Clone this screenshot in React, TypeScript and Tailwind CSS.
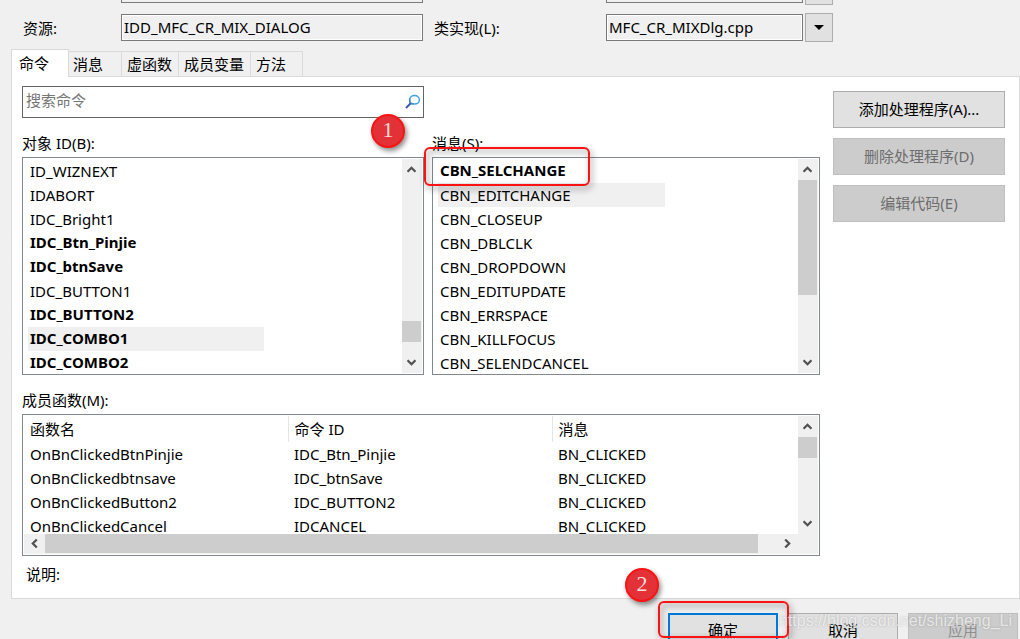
import type { ReactNode } from "react";

const objectIds = [
  { name: "ID_WIZNEXT" },
  { name: "IDABORT" },
  { name: "IDC_Bright1" },
  { name: "IDC_Btn_Pinjie", bold: true },
  { name: "IDC_btnSave", bold: true },
  { name: "IDC_BUTTON1" },
  { name: "IDC_BUTTON2", bold: true },
  { name: "IDC_COMBO1", bold: true, selected: true },
  { name: "IDC_COMBO2", bold: true },
];

const messages = [
  { name: "CBN_SELCHANGE", bold: true },
  { name: "CBN_EDITCHANGE", selected: true },
  { name: "CBN_CLOSEUP" },
  { name: "CBN_DBLCLK" },
  { name: "CBN_DROPDOWN" },
  { name: "CBN_EDITUPDATE" },
  { name: "CBN_ERRSPACE" },
  { name: "CBN_KILLFOCUS" },
  { name: "CBN_SELENDCANCEL" },
];

const members = [
  ["OnBnClickedBtnPinjie", "IDC_Btn_Pinjie", "BN_CLICKED"],
  ["OnBnClickedbtnsave", "IDC_btnSave", "BN_CLICKED"],
  ["OnBnClickedButton2", "IDC_BUTTON2", "BN_CLICKED"],
  ["OnBnClickedCancel", "IDCANCEL", "BN_CLICKED"],
];

const tabs = ["消息", "虚函数", "成员变量", "方法"];

type Item = { name: string; bold?: boolean; selected?: boolean };

const Chevron = ({ className = "" }: { className?: string }) => (
  <svg viewBox="0 0 9 7" className={`w-[9px] h-[7px] ${className}`} fill="none" stroke="#505050" strokeWidth="2.2">
    <path d="M0.5 5.8 L4.5 1.8 L8.5 5.8" />
  </svg>
);

const VerticalScroll = ({ thumb }: { thumb: string }) => (
  <div className="w-5 shrink-0 flex flex-col bg-[#f0f0f0]">
    <button aria-label="向上滚动" className="h-[21px] shrink-0 w-[19px] flex items-center justify-center"><Chevron /></button>
    <div className="flex-1"><div className={`w-[19px] bg-[#cdcdcd] ${thumb}`} /></div>
    <button aria-label="向下滚动" className="h-[21px] shrink-0 w-[19px] flex items-center justify-center"><Chevron className="rotate-180" /></button>
  </div>
);

const ListBox = ({ labelId, items, thumb }: { labelId: string; items: Item[]; thumb: string }) => (
  <div className="h-[218px] flex border border-[#828790] bg-white p-px">
    <ul role="listbox" aria-labelledby={labelId} className="flex-1 min-w-0 overflow-hidden pl-1">
      {items.map((item) => (
        <li
          key={item.name}
          role="option"
          aria-selected={!!item.selected}
          className={`h-6 pl-0.5 w-[63%] whitespace-nowrap ${item.bold ? "font-bold leading-[22px]" : "leading-6"} ${item.selected ? "bg-[#f0f0f0]" : ""}`}
        >
          {item.name}
        </li>
      ))}
    </ul>
    <VerticalScroll thumb={thumb} />
  </div>
);

const Marker = ({ children, className }: { children: ReactNode; className: string }) => (
  <span className={`absolute z-10 size-[34px] rounded-full border-2 border-[#fb1313] bg-[#e23237] text-center text-[22px] leading-[28px] text-[#ffdede] font-['Liberation_Serif',serif] shadow-[2px_3px_5px_rgba(0,0,0,0.45)] ${className}`}>
    {children}
  </span>
);

const Frame = ({ className }: { className: string }) => (
  <span className={`absolute z-10 pointer-events-none rounded-md border-2 border-[#fb1313] drop-shadow-[2px_3px_3px_rgba(0,0,0,0.5)] ${className}`} />
);

const SideButton = ({ children, disabled }: { children: ReactNode; disabled?: boolean }) => (
  <button
    disabled={disabled}
    className="h-[37px] w-full pb-0.5 border border-[#adadad] bg-[#e1e1e1] text-black disabled:border-[#bfbfbf] disabled:bg-[#cccccc] disabled:text-[#6d6d6d]"
  >
    {children}
  </button>
);

const App = () => {
  return (
    <main className="relative h-screen overflow-hidden flex flex-col bg-[#f0f0f0] text-black text-[15px] leading-6 font-['Noto_Sans','Noto_Sans_CJK_SC',sans-serif]">
      <div className="grid grid-cols-[98px_302fr_183px_197fr_2px_28px] pl-[23px] pr-[187px]">
        <div className="col-start-2 h-[3px] border border-t-0 border-[#7a7a7a]" />
        <div className="col-start-4 h-[3px] border border-t-0 border-[#7a7a7a]" />
        <div className="col-start-6 h-[5px] border border-t-0 border-[#adadad] bg-[#e1e1e1]" />
      </div>

      <div className="mt-2 grid grid-cols-[98px_302fr_183px_197fr_2px_28px] items-center pl-[23px] pr-[187px]">
        <label htmlFor="resource">资源:</label>
        <input id="resource" readOnly value="IDD_MFC_CR_MIX_DIALOG" className="h-[27px] w-full min-w-0 border border-[#7a7a7a] px-0.5 pb-0.5 outline outline-1 -outline-offset-2 outline-white" />
        <label htmlFor="impl" className="pl-[11px]">类实现(L):</label>
        <input id="impl" readOnly value="MFC_CR_MIXDlg.cpp" className="h-[27px] w-full min-w-0 border border-[#7a7a7a] px-0.5 pb-0.5 outline outline-1 -outline-offset-2 outline-white" />
        <button aria-label="打开列表" className="col-start-6 h-[29px] flex items-center justify-center border border-[#adadad] bg-[#e1e1e1]">
          <svg viewBox="0 0 10 5" className="w-[10px] h-[5px]"><path d="M0 0H10L5 5Z" /></svg>
        </button>
      </div>

      <div role="tablist" className="relative z-[1] mt-[7px] ml-[11px] flex items-end">
        <button role="tab" aria-selected="true" className="z-[1] h-7 w-[58px] pl-[7px] pb-0.5 text-left border border-b-0 border-[#dadada] bg-white">命令</button>
        {tabs.map((tab, i) => (
          <button
            key={tab}
            role="tab"
            aria-selected="false"
            className={`h-[26px] min-w-[53px] px-[5px] pr-1.5 text-left border border-[#dadada] bg-[#f0f0f0] ${i === 0 ? "-ml-0.5 w-[55px]" : "-ml-px"}`}
          >
            {tab}
          </button>
        ))}
      </div>

      <section className="-mt-px ml-[11px] flex gap-[13px] border border-[#dadada] bg-white pl-2.5 pr-3.5 pt-[9px] pb-[11px]">
        <div className="flex-1 min-w-0">
          <div className="grid grid-cols-[402fr_388fr] gap-x-2">
            <div className="relative h-8 flex border border-[#646464]">
              <input aria-label="搜索命令" placeholder="搜索命令" className="flex-1 min-w-0 px-[3px] pb-1 outline-none placeholder:text-[#767676]" />
              <button aria-label="搜索" className="w-[18px] flex items-center">
                <svg viewBox="0 0 16 16" className="size-4" fill="none">
                  <ellipse cx="9.5" cy="5.8" rx="4.9" ry="4.3" stroke="#3fa3dc" strokeWidth="1.5" />
                  <path d="M4.8 4.6V9.8H8.6" stroke="#4a83c8" strokeWidth="1.3" />
                  <path d="M5.6 9.4L1 14" stroke="#3b57a8" strokeWidth="2" />
                </svg>
              </button>
              <Marker className="right-[18px] top-[27px]">1</Marker>
            </div>
            <div className="col-start-1 pt-[13px]">
              <div id="objects" className="mb-0.5">对象 ID(B):</div>
              <ListBox labelId="objects" items={objectIds} thumb="mt-[141px] h-[21px]" />
            </div>
            <div className="relative pt-[13px]">
              <div id="messages" className="mb-0.5">消息(S):</div>
              <ListBox labelId="messages" items={messages} thumb="h-[115px]" />
              <Frame className="-left-2 top-[29px] w-[166px] h-[39px]" />
            </div>
          </div>

          <div id="members" className="mt-[13px] mb-0.5">成员函数(M):</div>
          <div className="h-[142px] flex flex-col border border-[#828790] p-px">
            <div className="flex-1 min-h-0 flex">
              <div className="flex-1 min-w-0 overflow-hidden">
                <table aria-labelledby="members" className="w-full table-fixed text-left">
                  <thead>
                    <tr className="h-[26px]">
                      <th className="w-[264px] p-0 pl-1.5 font-normal border-r border-[#e5e5e5]">函数名</th>
                      <th className="w-[264px] p-0 pl-1.5 font-normal border-r border-[#e5e5e5]">命令 ID</th>
                      <th className="p-0 pl-1.5 font-normal">消息</th>
                    </tr>
                  </thead>
                  <tbody>
                    {members.map((row) => (
                      <tr key={row[0]} className="h-6">
                        {row.map((cell) => <td key={cell} className="p-0 pl-1.5">{cell}</td>)}
                      </tr>
                    ))}
                  </tbody>
                </table>
              </div>
              <VerticalScroll thumb="h-[21px]" />
            </div>
            <div className="h-5 flex bg-[#f0f0f0] pr-5">
              <button aria-label="向左滚动" className="h-[19px] w-[21px] flex items-center justify-center"><Chevron className="-rotate-90" /></button>
              <div className="flex-1"><div className="h-[19px] w-[97.4%] bg-[#cdcdcd]" /></div>
              <button aria-label="向右滚动" className="h-[19px] w-[21px] flex items-center justify-center"><Chevron className="rotate-90" /></button>
            </div>
          </div>
          <div className="mt-1.5 mb-px pl-1">说明:</div>
        </div>

        <div className="w-[172px] shrink-0 flex flex-col gap-2.5 pt-[5px]">
          <SideButton>添加处理程序(A)...</SideButton>
          <SideButton disabled>删除处理程序(D)</SideButton>
          <SideButton disabled>编辑代码(E)</SideButton>
        </div>
      </section>

      <footer className="relative mt-3.5 flex justify-end gap-2.5 pr-0.5">
        <div className="relative">
          <button className="h-9 w-[110px] pb-0.5 border-2 border-[#0078d7] bg-[#e1e1e1]">确定</button>
          <Frame className="-left-2.5 -top-3 w-[131px] h-[37px]" />
          <Marker className="-left-[43px] -top-[45px]">2</Marker>
        </div>
        <button className="h-9 w-[110px] pb-0.5 border border-[#adadad] bg-[#e1e1e1]">取消</button>
        <button disabled className="h-9 w-[110px] pb-0.5 border border-[#bfbfbf] bg-[#cccccc] text-[#8f8f8f]">应用</button>
        <span className="absolute z-10 right-2 -top-1 text-base text-white/70 font-['Liberation_Sans',sans-serif] [text-shadow:0_0_2px_rgba(120,120,120,0.5)]">
          https://blog.csdn.net/shizheng_Li
        </span>
      </footer>
    </main>
  );
};

export default App;
